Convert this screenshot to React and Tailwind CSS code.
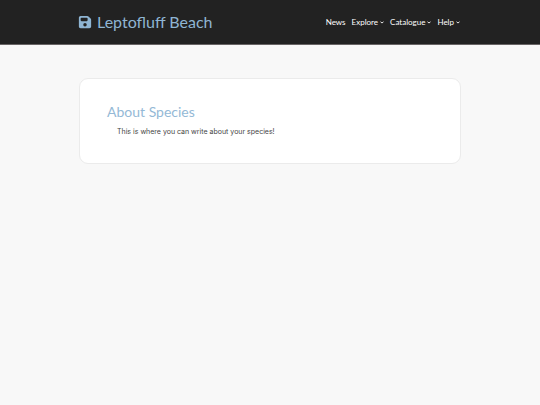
import { FaFloppyDisk } from "react-icons/fa6";

const links = [
  { label: "News", menu: false },
  { label: "Explore", menu: true },
  { label: "Catalogue", menu: true },
  { label: "Help", menu: true },
];

function Chevron() {
  return (
    <svg viewBox="0 0 4 3" className="mt-0.5 h-[3px] w-1" fill="none" stroke="currentColor" aria-hidden="true">
      <path d="M0.5 0.8 2 2 3.5 0.8" strokeWidth="0.9" />
    </svg>
  );
}

export default function App() {
  return (
    <div className="min-h-screen bg-[#f8f8f8] font-['Lato',sans-serif] text-[#444444]">
      <header className="border-b border-[#686465] bg-[#222222]">
        <div className="mx-auto flex h-11 w-full max-w-[384px] items-center justify-between pb-px pr-0.5">
          <a href="#home" className="flex items-center gap-[5px] text-[#8fb5d3]">
            <FaFloppyDisk className="size-[14px]" aria-hidden="true" />
            <span className="text-[16px] leading-5">Leptofluff Beach</span>
          </a>
          <nav className="flex items-center gap-1.5 text-[8px] leading-3 text-white">
            {links.map(({ label, menu }) =>
              menu ? (
                <button key={label} type="button" className="flex items-center gap-0.5">
                  {label}
                  <Chevron />
                </button>
              ) : (
                <a key={label} href="#news">{label}</a>
              )
            )}
          </nav>
        </div>
      </header>
      <main className="mx-auto mt-[33px] w-full max-w-[382px] rounded-[9px] border border-[#ebebeb] bg-white px-[27px] pb-[25px] pt-[23px]">
        <h1 className="text-[14px] leading-5 text-[#94b9d6]">About Species</h1>
        <p className="mt-1 px-2.5 font-['Inter',sans-serif] text-[7px] leading-3">
          This is where you can write about your species!
        </p>
      </main>
    </div>
  );
}
